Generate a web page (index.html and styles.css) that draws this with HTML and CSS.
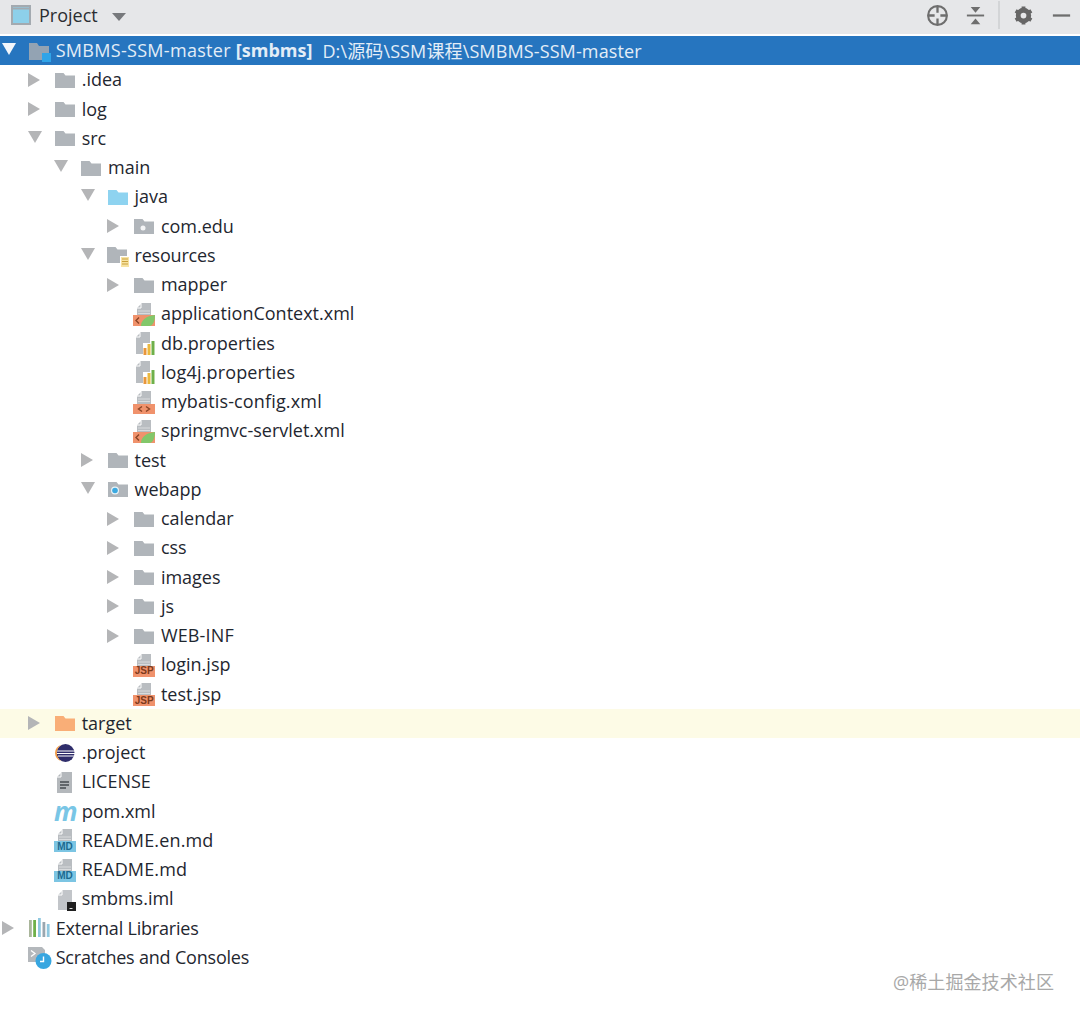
FILE: index.html
```html
<!DOCTYPE html>
<html>
<head>
  <title>Project</title>
  <meta charset="utf-8">
  <link rel="stylesheet" href="styles.css">
</head>
<body>
  <svg class="defs" width="0" height="0">
    <symbol id="folder" viewBox="0 0 22 22"><path d="M1 4h8.500l2 2.500H21V19H1z" fill="currentColor"/></symbol>
    <symbol id="pkg" viewBox="0 0 22 22"><path d="M1 4h8.500l2 2.500H21V19H1z" fill="#b0b5ba"/><circle cx="10" cy="13" r="2.500" fill="#f4f5f6"/></symbol>
    <symbol id="web" viewBox="0 0 22 22"><path d="M1 4h8.500l2 2.500H21V19H1z" fill="#b0b5ba"/><circle cx="8" cy="12.500" r="4" fill="#e8f3f8"/><circle cx="8" cy="12.500" r="2.800" fill="#3ca9e0"/></symbol>
    <symbol id="res" viewBox="0 0 22 24"><path d="M0 4h8.500l2 2.500H20V13h-7v7H0z" fill="#b0b5ba"/><path d="M14 14h8v10h-8z" fill="#f7e3a3"/><path d="M15 16h6M15 18.500h6M15 21h6" stroke="#c9a13d" stroke-width="1"/></symbol>
    <symbol id="root" viewBox="0 0 24 22"><path d="M1 3h8l2 3h10v7h-7v7H1z" fill="#93a3b3"/><path d="M14 13h9v9h-9z" fill="#2fa4e8"/></symbol>
    <symbol id="page" viewBox="0 0 22 24"><path d="M9 1h9v13H4V6z" fill="#b9bdc1"/><path d="M8 2v4H4" fill="none" stroke="#fff" stroke-width="1"/><path d="M5 9h12M5 11.500h12" stroke="#d9dbdd" stroke-width="1"/></symbol>
    <symbol id="xmlspring" viewBox="0 0 22 24"><use href="#page" width="22" height="24"/><path d="M0 13h22v11H0z" fill="#f0926c"/><path d="M6 15.500l-3 3 3 3" fill="none" stroke="#8a4526" stroke-width="1.400"/><path d="M8 24c0-6 5-10 14-11 0 6-2 11-6 11z" fill="#82c76a"/></symbol>
    <symbol id="xml" viewBox="0 0 22 24"><use href="#page" width="22" height="24"/><path d="M0 14h22v10H0z" fill="#f0926c"/><path d="M9 16.500l-3.500 2.500 3.500 2.500M13 16.500l3.500 2.500-3.500 2.500" fill="none" stroke="#8a4526" stroke-width="1.400"/></symbol>
    <symbol id="props" viewBox="0 0 22 24"><path d="M8 1h9v11h-7v11H3V6z" fill="#b9bdc1"/><path d="M7 2v4H3" fill="none" stroke="#fff"/><path d="M10.500 17h3v7h-3z" fill="#e8963a"/><path d="M14.500 13h3v11h-3z" fill="#eab83e"/><path d="M18.500 10h3v14h-3z" fill="#6fb04a"/></symbol>
    <symbol id="jsp" viewBox="0 0 22 24"><use href="#page" width="22" height="24"/><path d="M0 13h22v11H0z" fill="#f0926c"/></symbol>
    <symbol id="md" viewBox="0 0 22 24"><use href="#page" width="22" height="24"/><path d="M0 13h22v11H0z" fill="#7cc5e3"/></symbol>
    <symbol id="eclipse" viewBox="0 0 22 22"><circle cx="11.500" cy="11" r="9" fill="#2f2d6b"/><path d="M3 9h18M3 11.500h18M4 14h16" stroke="#fff" stroke-width="1"/><path d="M7.500 2.800a9.500 9.500 0 0 0 0 16.400A9 9 0 0 1 1 11a9 9 0 0 1 6.500-8.200z" fill="#f29a42"/></symbol>
    <symbol id="text" viewBox="0 0 22 22"><path d="M8 1h10v21H3V6z" fill="#b4b8bc"/><path d="M7 2v4H3" fill="none" stroke="#fff"/><path d="M6 11h9M6 14h9M6 17h6" stroke="#454b50" stroke-width="1.300"/></symbol>
    <symbol id="iml" viewBox="0 0 22 24"><path d="M9 3h9v12h-4v8H4V8z" fill="#c2c5c9"/><path d="M8 4v4H4" fill="none" stroke="#fff"/><path d="M13 15h9v9h-9z" fill="#1f1f1f"/><path d="M15.500 21.500h3" stroke="#ddd"/></symbol>
    <symbol id="libs" viewBox="0 0 22 22"><path d="M1 3h2.800v17H1z" fill="#a9b59a"/><path d="M5.200 3H8v17H5.200z" fill="#6fb04a"/><path d="M10 1h2.800v19H10z" fill="#8fc8e0"/><path d="M14.500 5h2.800v15h-2.800z" fill="#9aa7b0"/><path d="M18.800 7h2.800v13h-2.800z" fill="#8fc8e0"/></symbol>
    <symbol id="scratch" viewBox="0 0 24 24"><path d="M0 2h14l3 3v5h-5v7H0z" fill="#b4b8bc"/><path d="M3 5.500l4 3-4 3" fill="none" stroke="#fff" stroke-width="1.300"/><circle cx="15.500" cy="16" r="8" fill="#38a6e0"/><path d="M15.500 11.500v5h-3.500" fill="none" stroke="#fff" stroke-width="1.400"/></symbol>
  </svg>

  <div class="toolbar">
    <svg class="tool-win" viewBox="0 0 20 20"><rect x="1" y="1" width="18" height="18" fill="#8dd0ea" stroke="#a3aab0" stroke-width="2"/><path d="M2 3.500h16" stroke="#a3aab0" stroke-width="2"/></svg>
    <span class="tool-title">Project</span>
    <span class="tool-caret"></span>
    <div class="tool-right">
      <svg class="tool-ico" viewBox="0 0 24 24"><circle cx="12" cy="12" r="9.800" fill="none" stroke="#6e6e6e" stroke-width="2.200"/><path d="M12 2v7M12 15v7M2 12h7M15 12h7" stroke="#6e6e6e" stroke-width="2.400"/></svg>
      <svg class="tool-ico" viewBox="0 0 24 24"><path d="M3 12h18" stroke="#6e6e6e" stroke-width="2"/><path d="M7 3h10l-5 6zM7 21h10l-5-6z" fill="#6e6e6e"/></svg>
      <span class="tool-sep"></span>
      <svg class="tool-ico" viewBox="0 0 24 24"><circle cx="12" cy="12" r="5.500" fill="none" stroke="#666" stroke-width="5"/><path d="M12 2.500v3M12 18.500v3M3.800 7.200l2.600 1.500M17.600 15.300l2.600 1.500M3.800 16.800l2.600-1.500M17.600 8.700l2.600-1.500" stroke="#666" stroke-width="4"/></svg>
      <svg class="tool-ico" viewBox="0 0 24 24"><path d="M3 12h18" stroke="#6e6e6e" stroke-width="2.400"/></svg>
    </div>
  </div>

  <div class="tree">
    <div class="row d0 selected"><i class="arrow open"></i><svg class="ico wide"><use href="#root"/></svg><span class="name">SMBMS-SSM-master <b>[smbms]</b></span><span class="path">D:\源码\SSM课程\SMBMS-SSM-master</span></div>
    <div class="row d1"><i class="arrow"></i><svg class="ico gray"><use href="#folder"/></svg><span class="name">.idea</span></div>
    <div class="row d1"><i class="arrow"></i><svg class="ico gray"><use href="#folder"/></svg><span class="name">log</span></div>
    <div class="row d1"><i class="arrow open"></i><svg class="ico gray"><use href="#folder"/></svg><span class="name">src</span></div>
    <div class="row d2"><i class="arrow open"></i><svg class="ico gray"><use href="#folder"/></svg><span class="name">main</span></div>
    <div class="row d3"><i class="arrow open"></i><svg class="ico blue"><use href="#folder"/></svg><span class="name">java</span></div>
    <div class="row d4"><i class="arrow"></i><svg class="ico"><use href="#pkg"/></svg><span class="name">com.edu</span></div>
    <div class="row d3"><i class="arrow open"></i><svg class="ico tall"><use href="#res"/></svg><span class="name tight">resources</span></div>
    <div class="row d4"><i class="arrow"></i><svg class="ico gray"><use href="#folder"/></svg><span class="name">mapper</span></div>
    <div class="row d4"><i class="arrow none"></i><svg class="ico tall"><use href="#xmlspring"/></svg><span class="name">applicationContext.xml</span></div>
    <div class="row d4"><i class="arrow none"></i><svg class="ico tall"><use href="#props"/></svg><span class="name">db.properties</span></div>
    <div class="row d4"><i class="arrow none"></i><svg class="ico tall"><use href="#props"/></svg><span class="name caps">log4j.properties</span></div>
    <div class="row d4"><i class="arrow none"></i><svg class="ico tall"><use href="#xml"/></svg><span class="name caps">mybatis-config.xml</span></div>
    <div class="row d4"><i class="arrow none"></i><svg class="ico tall"><use href="#xmlspring"/></svg><span class="name">springmvc-servlet.xml</span></div>
    <div class="row d3"><i class="arrow"></i><svg class="ico gray"><use href="#folder"/></svg><span class="name">test</span></div>
    <div class="row d3"><i class="arrow open"></i><svg class="ico"><use href="#web"/></svg><span class="name">webapp</span></div>
    <div class="row d4"><i class="arrow"></i><svg class="ico gray"><use href="#folder"/></svg><span class="name">calendar</span></div>
    <div class="row d4"><i class="arrow"></i><svg class="ico gray"><use href="#folder"/></svg><span class="name">css</span></div>
    <div class="row d4"><i class="arrow"></i><svg class="ico gray"><use href="#folder"/></svg><span class="name">images</span></div>
    <div class="row d4"><i class="arrow"></i><svg class="ico gray"><use href="#folder"/></svg><span class="name">js</span></div>
    <div class="row d4"><i class="arrow"></i><svg class="ico gray"><use href="#folder"/></svg><span class="name caps">WEB-INF</span></div>
    <div class="row d4"><i class="arrow none"></i><span class="badge-ico"><svg class="ico tall"><use href="#jsp"/></svg><em class="jsp">JSP</em></span><span class="name">login.jsp</span></div>
    <div class="row d4"><i class="arrow none"></i><span class="badge-ico"><svg class="ico tall"><use href="#jsp"/></svg><em class="jsp">JSP</em></span><span class="name">test.jsp</span></div>
    <div class="row d1 excluded"><i class="arrow"></i><svg class="ico orange"><use href="#folder"/></svg><span class="name">target</span></div>
    <div class="row d1"><i class="arrow none"></i><svg class="ico"><use href="#eclipse"/></svg><span class="name">.project</span></div>
    <div class="row d1"><i class="arrow none"></i><svg class="ico"><use href="#text"/></svg><span class="name">LICENSE</span></div>
    <div class="row d1"><i class="arrow none"></i><span class="maven">m</span><span class="name">pom.xml</span></div>
    <div class="row d1"><i class="arrow none"></i><span class="badge-ico"><svg class="ico tall"><use href="#md"/></svg><em class="mdl">MD</em></span><span class="name caps">README.en.md</span></div>
    <div class="row d1"><i class="arrow none"></i><span class="badge-ico"><svg class="ico tall"><use href="#md"/></svg><em class="mdl">MD</em></span><span class="name caps">README.md</span></div>
    <div class="row d1"><i class="arrow none"></i><svg class="ico tall"><use href="#iml"/></svg><span class="name">smbms.iml</span></div>
    <div class="row d0"><i class="arrow"></i><svg class="ico"><use href="#libs"/></svg><span class="name tight">External Libraries</span></div>
    <div class="row d0"><i class="arrow none"></i><svg class="ico big"><use href="#scratch"/></svg><span class="name tight">Scratches and Consoles</span></div>
  </div>

  <div class="watermark">@稀土掘金技术社区</div>
</body>
</html>
```
FILE: styles.css
```css
body {
  margin: 0;
  height: 1019px;
  position: relative;
  overflow: hidden;
  background: #fff;
  color: #1f2730;
  font-family: "Open Sans", "Noto Sans CJK SC", sans-serif;
  font-size: 18px;
}
.defs {position: absolute;}

/* top bar */
.toolbar {
  display: flex;
  align-items: center;
  height: 30px;
  padding: 0 0 4px 11px;
  background: #e6e7e9;
}
.tool-win {width: 20px;height: 20px;}
.tool-title {margin-left: 8px;color: #2a2d30;}
.tool-caret {
  margin-left: 14px;
  margin-top: 3px;
  border-left: 7px solid transparent;
  border-right: 7px solid transparent;
  border-top: 8px solid #77797c;
}
.tool-right {
  display: flex;
  align-items: center;
  gap: 15px;
  margin-left: auto;
  padding-right: 7.500px;
}
.tool-ico {width: 23px;height: 23px;}
.tool-sep {width: 2px;height: 28px;background: #d3d5d7;margin: 0 -3.500px;}

/* tree */
.tree {margin-top: 2px;}
.row {
  display: flex;
  align-items: center;
  height: 29.26px;
  white-space: nowrap;
}
.d0 {padding-left: 2px;}
.d1 {padding-left: 28px;}
.d2 {padding-left: 54.400px;}
.d3 {padding-left: 80.800px;}
.d4 {padding-left: 107.200px;}
.selected {background: #2675bf;color: #e3edf7;}
.excluded {background: #fdfbe6;}
.name {margin-top: -1px;}
.name b {font-weight: 700;letter-spacing: 0;}
.selected .name {letter-spacing: .3px;}
.path {margin-left: 10px;margin-top: -1px;letter-spacing: .12px;}
.caps {letter-spacing: .15px;}
.tight {letter-spacing: -.2px;}

.arrow {
  flex: none;
  width: 0;
  height: 0;
  margin-right: 14px;
  border-left: 12px solid #b4b5b7;
  border-top: 7px solid transparent;
  border-bottom: 7px solid transparent;
}
.arrow.open {
  margin-right: 12px;
  margin-top: -3px;
  border-top: 12px solid #b4b5b7;
  border-left: 7px solid transparent;
  border-right: 7px solid transparent;
  border-bottom: 0;
}
.selected .arrow.open {border-top-color: #f2f6fb;}
.arrow.none {border-color: transparent;}

.ico {flex: none;width: 22px;height: 22px;margin-right: 5.700px;overflow: visible;}
.ico.tall {height: 24px;}
.ico.big {width: 24px;height: 24px;margin-right: 3.700px;}
.ico.wide {width: 24px;margin-right: 3.700px;}
.gray {color: #b0b5ba;}
.blue {color: #8ed3f0;}
.orange {color: #f9ae77;}

.badge-ico {position: relative;display: flex;}
.badge-ico em {
  position: absolute;
  left: 0;
  width: 22px;
  top: 13.500px;
  text-align: center;
  font: 700 10px/10px "Liberation Sans", sans-serif;
}
.jsp {color: #7d3a1c;}
.mdl {color: #1d6a90;}
.maven {
  flex: none;
  width: 22px;
  margin-right: 5.700px;
  text-align: center;
  color: #79c6e6;
  font: italic 700 26px/22px "Open Sans", sans-serif;
}

.watermark {
  position: absolute;
  right: 26px;
  top: 970px;
  color: #a8a8a8;
  font-size: 18px;
  line-height: 24px;
  letter-spacing: .1px;
}
```
